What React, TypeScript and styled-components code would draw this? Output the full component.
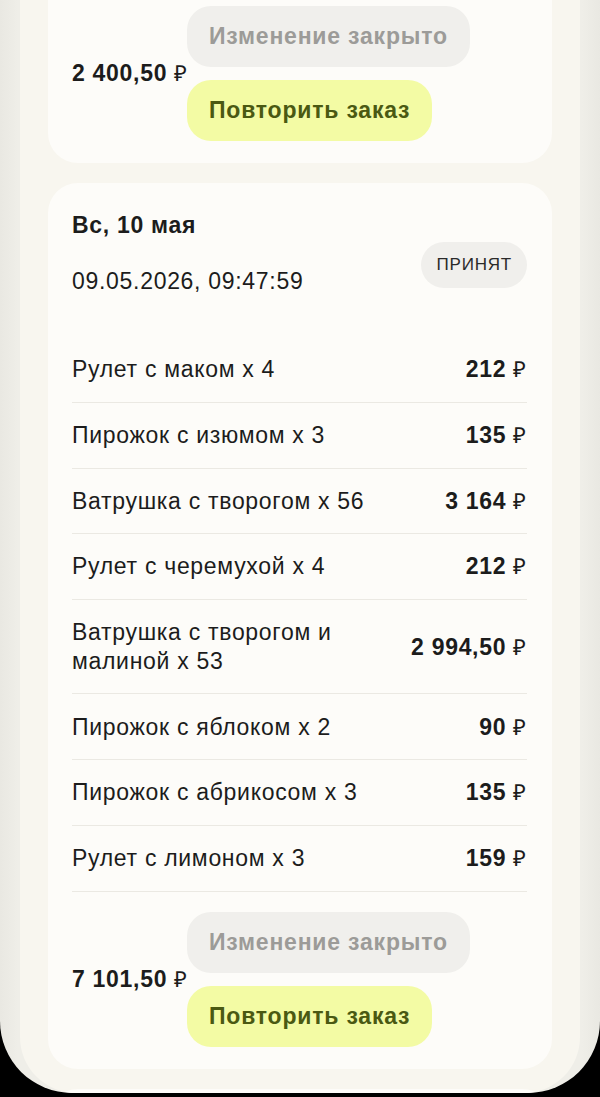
import styled, { createGlobalStyle } from 'styled-components';

interface IOrderItem {
  name: string;
  price: string;
}

const GlobalStyle = createGlobalStyle`
  html, body {
    margin: 0;
    padding: 0;
    background: #000;
  }
  body {
    font-family: 'Liberation Sans', Arial, sans-serif;
    color: #1c1c1c;
  }
`;

const items: IOrderItem[] = [
  { name: 'Рулет с маком x 4', price: '212' },
  { name: 'Пирожок с изюмом x 3', price: '135' },
  { name: 'Ватрушка с творогом x 56', price: '3 164' },
  { name: 'Рулет с черемухой x 4', price: '212' },
  { name: 'Ватрушка с творогом и малиной x 53', price: '2 994,50' },
  { name: 'Пирожок с яблоком x 2', price: '90' },
  { name: 'Пирожок с абрикосом x 3', price: '135' },
  { name: 'Рулет с лимоном x 3', price: '159' },
];

const Rub = () => <RubSign>₽</RubSign>;

const OrderFooter = ({ total }: { total: string }) => (
  <Footer>
    <Total>
      {total} <Rub />
    </Total>
    <Actions>
      <Button disabled>Изменение закрыто</Button>
      <Button $primary>Повторить заказ</Button>
    </Actions>
  </Footer>
);

const App = () => {
  return (
    <>
      <GlobalStyle />
      <Screen>
        <Feed>
          <Card $clipped>
            <OrderFooter total="2 400,50" />
          </Card>

          <Card>
            <Header>
              <div>
                <Title>Вс, 10 мая</Title>
                <DateText>09.05.2026, 09:47:59</DateText>
              </div>
              <Status>ПРИНЯТ</Status>
            </Header>
            <List>
              {items.map((item, i) => (
                <Row key={i}>
                  <Name>{item.name}</Name>
                  <Price>
                    {item.price} <Rub />
                  </Price>
                </Row>
              ))}
            </List>
            <Divided>
              <OrderFooter total="7 101,50" />
            </Divided>
          </Card>

          {/* next order, only its top edge is on screen */}
          <Card $stub />
        </Feed>
      </Screen>
    </>
  );
};

const Screen = styled.div`
  width: 600px;
  height: 1093px;
  background: linear-gradient(90deg, #e9e8e2 0%, #efeee8 3%, #efeee8 97%, #e9e8e2 100%);
  border-radius: 0 0 72px 72px;
  padding: 0 20px;
  box-sizing: border-box;
  overflow: hidden;
`;

const Feed = styled.div`
  height: 100%;
  background: #f8f6ef;
  border-radius: 0 0 56px 56px;
  padding: 0 28px;
  display: flex;
  flex-direction: column;
  gap: 20px;
  overflow: hidden;
`;

const Card = styled.div<{ $clipped?: boolean; $stub?: boolean }>`
  flex-shrink: 0;
  background: #fdfcf9;
  border-radius: ${(p) => (p.$clipped ? '0 0 30px 30px' : '30px')};
  padding: ${(p) => (p.$clipped ? '6px 25px 22px 24px' : '28px 25px 22px 24px')};
  min-height: ${(p) => (p.$stub ? '200px' : '0')};
  letter-spacing: 0.7px;
`;

const Header = styled.div`
  display: flex;
  justify-content: space-between;
  align-items: flex-end;
  padding-bottom: 42px;
`;

const Title = styled.div`
  font-size: 23px;
  font-weight: 700;
  line-height: 28px;
`;

const DateText = styled.div`
  font-size: 23px;
  line-height: 28px;
  margin-top: 28px;
`;

const Status = styled.div`
  background: #f0efec;
  border-radius: 23px;
  height: 46px;
  padding: 0 15px;
  display: flex;
  align-items: center;
  font-size: 17px;
  letter-spacing: 0.8px;
  color: #2a2a2a;
  margin-bottom: 7px;
`;

const List = styled.div`
  display: flex;
  flex-direction: column;
`;

const Row = styled.div`
  display: flex;
  justify-content: space-between;
  align-items: center;
  gap: 40px;
  padding: 18.15px 0;
  border-bottom: 1px solid #ebe9e3;
`;

const Name = styled.div`
  font-size: 23px;
  line-height: 28.5px;
`;

const Price = styled.div`
  flex-shrink: 0;
  font-size: 23px;
  font-weight: 700;
  line-height: 28.5px;
  white-space: nowrap;
`;

const RubSign = styled.span`
  font-weight: 400;
  font-size: 22px;
  line-height: 1;
`;

const Divided = styled.div`
  padding-top: 20px;
`;

const Footer = styled.div`
  display: flex;
  align-items: center;
`;

const Total = styled.div`
  width: 115px;
  flex-shrink: 0;
  font-size: 23px;
  font-weight: 700;
  white-space: nowrap;
`;

const Actions = styled.div`
  display: flex;
  flex-direction: column;
  align-items: flex-start;
  gap: 13px;
`;

const Button = styled.button<{ $primary?: boolean }>`
  height: 61px;
  padding: 0 22px;
  border: none;
  border-radius: 24px;
  font-family: 'Liberation Sans', Arial, sans-serif;
  font-size: 23px;
  font-weight: 700;
  letter-spacing: 0.8px;
  background: ${(p) => (p.$primary ? '#f3fba4' : '#f0efec')};
  color: ${(p) => (p.$primary ? '#4a5912' : '#9c9b98')};
`;

export default App;
